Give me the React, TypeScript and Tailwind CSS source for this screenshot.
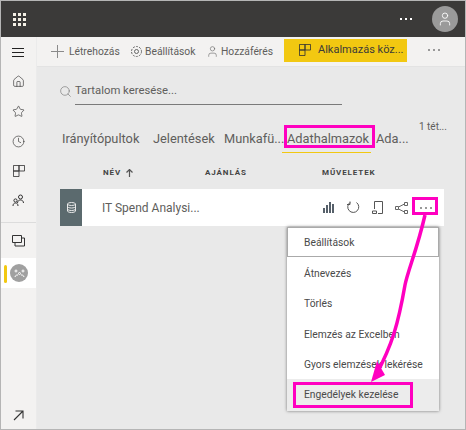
import { Clock, Home, Search, Star, User } from "lucide-react";

const font = { fontFamily: 'Roboto, "Open Sans", sans-serif' };

const AppsGrid = () => (
  <div className="grid grid-cols-3 gap-[2px] w-[13px]">
    {Array.from({ length: 9 }).map((_, i) => (
      <span key={i} className="w-[3px] h-[3px] bg-[#f4f0e6]" />
    ))}
  </div>
);

const Dots = ({ color = "bg-white" }: { color?: string }) => (
  <div className="flex gap-[3px]">
    <span className={`w-[2px] h-[2px] ${color}`} />
    <span className={`w-[2px] h-[2px] ${color}`} />
    <span className={`w-[2px] h-[2px] ${color}`} />
  </div>
);

const AppIcon = ({ stroke = "#444", size = 14 }: { stroke?: string; size?: number }) => (
  <svg width={size} height={size} viewBox="0 0 14 14" fill="none" stroke={stroke} strokeWidth="1">
    <path d="M.5.5h6.500v6.500H.5zM7 .5h6.500v6.500H7zM.5 7h6.500v6.500H.5z" />
  </svg>
);

const Rail = () => (
  <div className="w-[36px] shrink-0 bg-[#f3f2f1] border-r border-[#ebebeb] flex flex-col items-center">
    <div className="h-[30px] w-full flex flex-col items-center justify-center gap-[3px] pr-[1px]">
      <span className="w-[12px] h-[1px] bg-[#222]" />
      <span className="w-[12px] h-[1px] bg-[#222]" />
      <span className="w-[12px] h-[1px] bg-[#222]" />
    </div>
    <div className="h-[29px] flex items-center"><Home size={13} strokeWidth={1.2} color="#333" /></div>
    <div className="h-[30px] flex items-center"><Star size={13} strokeWidth={1.2} color="#333" /></div>
    <div className="h-[30px] flex items-center"><Clock size={13} strokeWidth={1.2} color="#333" /></div>
    <div className="h-[29px] flex items-center"><AppIcon stroke="#333" size={12} /></div>
    <div className="h-[30px] flex items-center">
      <svg width="13" height="13" viewBox="0 0 13 13" fill="none" stroke="#333" strokeWidth="1">
        <circle cx="8.500" cy="3" r="2" />
        <path d="M5.500 9c0-2 1.500-3 3-3s3 1 3 3" />
        <circle cx="3.500" cy="6.500" r="1.600" />
        <path d="M1 12c0-2 1-3 2.500-3s2.500 1 2.500 3" />
      </svg>
    </div>
    <div className="w-full h-[1px] bg-[#dcdcdc] mt-[7px]" />
    <div className="h-[35px] flex items-center">
      <svg width="13" height="12" viewBox="0 0 13 12" fill="none" stroke="#333" strokeWidth="1">
        <path d="M.5.500h9v7h-9zM10 3h2.500v8H3V8" />
      </svg>
    </div>
    <div className="relative h-[30px] w-full bg-white flex items-center justify-center">
      <span className="absolute left-[3px] top-[7px] w-[3px] h-[18px] rounded-sm bg-[#f2c811]" />
      <div className="w-[18px] h-[18px] rounded-full bg-[#a0a0a0] flex items-center justify-center ml-[1px]">
        <svg width="11" height="9" viewBox="0 0 11 9" fill="none" stroke="#fff" strokeWidth="1">
          <circle cx="2" cy="2" r="1" />
          <circle cx="9" cy="2" r="1" />
          <circle cx="5.500" cy="4.500" r="1" />
          <path d="M1 8c.5-2 1.500-2 3-2M10 8c-.5-2-1.500-2-3-2" />
        </svg>
      </div>
    </div>
    <div className="mt-auto mb-[8px]">
      <svg width="11" height="11" viewBox="0 0 11 11" fill="none" stroke="#333" strokeWidth="1.100">
        <path d="M1 10 10 1M2.500 1H10v7.500" />
      </svg>
    </div>
  </div>
);

const Toolbar = () => (
  <div className="h-[30px] bg-[#f3f2f1] border-b border-[#e3e3e3] flex items-center text-[10.3px] text-[#605e5c] shrink-0">
    <svg className="ml-[14px]" width="13" height="13" viewBox="0 0 13 13" stroke="#8a8a8a" strokeWidth="1">
      <path d="M6.500 0v13M0 6.500h13" />
    </svg>
    <span className="ml-[5px] w-[49px]">Létrehozás</span>
    <svg className="ml-[12px]" width="13" height="13" viewBox="0 0 13 13" fill="none" stroke="#666" strokeWidth="1">
      <circle cx="6.500" cy="6.500" r="2" />
      <circle cx="6.500" cy="6.500" r="5" strokeDasharray="2 1.200" />
    </svg>
    <span className="ml-[2px] w-[48px]">Beállítások</span>
    <User className="ml-[13px]" size={13} strokeWidth={1} color="#555" />
    <span className="ml-[2px] w-[50px]">Hozzáférés</span>
    <div className="ml-[13px] w-[123px] h-[23px] bg-[#f2c811] flex items-center text-[#3b3a39] mt-[-3px] shrink-0">
      <span className="ml-[15px] flex"><AppIcon stroke="#333" size={12} /></span>
      <span className="ml-[7px] text-[11px] whitespace-nowrap">Alkalmazás köz...</span>
    </div>
    <div className="ml-[21px] mt-[-3px]"><Dots color="bg-[#999]" /></div>
  </div>
);

const Tabs = () => (
  <div className="relative flex items-start h-[33px] mt-[20px] pl-[25px] text-[12.8px] text-[#605e5c] whitespace-nowrap">
    <span className="w-[78px]">Irányítópultok</span>
    <span className="ml-[13px] w-[57px]">Jelentések</span>
    <span className="ml-[14px] w-[57px]">Munkafü...</span>
    <span className="ml-[1px] pl-[5px] border-b border-[#f2c811] h-[24px] w-[89px]">Adathalmazok</span>
    <span className="ml-[5px]">Ada...</span>
    <span className="absolute left-[382px] top-[-10px] text-[10px]">1 tét...</span>
  </div>
);

const TableHeader = () => (
  <div className="flex items-center h-[27px] pb-[5px] text-[8px] font-bold tracking-[0.9px] text-[#444]">
    <span className="ml-[66px] w-[102px] flex items-center gap-[5px]">
      NÉV
      <svg width="7" height="8" viewBox="0 0 7 8" fill="none" stroke="#555" strokeWidth="1.200"><path d="M3.500 8V1M.5 3.500l3-3 3 3" /></svg>
    </span>
    <span className="w-[117px]">AJÁNLÁS</span>
    <span>MŰVELETEK</span>
  </div>
);

const Row = () => (
  <div className="flex h-[37px] ml-[23px] w-[384px] bg-white items-center">
    <div className="w-[22px] h-full bg-[#5b6a6e] flex items-center justify-center">
      <svg width="9" height="11" viewBox="0 0 9 11" fill="none" stroke="#e8e8e8" strokeWidth="1">
        <ellipse cx="4.500" cy="2" rx="4" ry="1.500" />
        <path d="M.5 2v7c0 .8 1.800 1.500 4 1.500s4-.7 4-1.500V2M.5 4.500c0 .8 1.800 1.500 4 1.500s4-.7 4-1.500M.5 7c0 .8 1.800 1.500 4 1.500s4-.7 4-1.500" />
      </svg>
    </div>
    <span className="ml-[20px] text-[12px] text-[#605e5c]">IT Spend Analysi...</span>
    <div className="ml-auto flex items-center text-[#555]">
      <svg width="13" height="13" viewBox="0 0 13 13" fill="#56606a"><path d="M0 7h2v5H0zM3 4h2v8H3zM6 1h2v11H6zM9 3h2v9H9z" /></svg>
      <svg className="ml-[11px]" width="13" height="13" viewBox="0 0 13 13" fill="none" stroke="#555" strokeWidth="1"><path d="M9.500 1.500A5.500 5.500 0 1 1 3 1.500M3 .5v3h-3" /></svg>
      <svg className="ml-[12px]" width="13" height="13" viewBox="0 0 13 13" fill="none" stroke="#555" strokeWidth="1"><path d="M2.500 8V.5h8v12H6M.5 10h4v2.500h-4z" /></svg>
      <svg className="ml-[10px]" width="13" height="12" viewBox="0 0 13 12" fill="none" stroke="#666" strokeWidth="1"><path d="M.5 4.500h3v3h-3zM9.500.5h3v3h-3zM9.500 8.500h3v3h-3zM3.500 5l6-3M3.500 7l6 3" /></svg>
      <div className="ml-[12px] mr-[12px]"><Dots color="bg-[#999]" /></div>
    </div>
  </div>
);

const items = ["Átnevezés", "Törlés", "Elemzés az Excelben", "Gyors elemzések lekérése"];

const Menu = () => (
  <div className="absolute left-[286px] top-[226px] w-[152px] h-[184px] bg-white shadow-[0_0_3px_rgba(0,0,0,0.5)] text-[10.3px] text-[#4a4a4a] flex flex-col">
    <div className="h-[30px] border border-[#aaa] flex items-center pl-[16px] pt-[1px]">Beállítások</div>
    {items.map(label => (
      <div key={label} className="h-[30.5px] flex items-center pl-[17px] pt-[2px] whitespace-nowrap">{label}</div>
    ))}
    <div className="flex-1 bg-[#ececec] flex items-center pl-[17px]">Engedélyek kezelése</div>
  </div>
);

const Highlight = ({ className }: { className: string }) => (
  <div className={`absolute border-[3px] border-[#ff00c0] ${className}`} />
);

export default function App() {
  return (
    <div style={font} className="relative w-[466px] h-[430px] overflow-hidden border border-[#b5b5b5] flex flex-col bg-[#e9e9e9]">
      <div className="h-[36px] shrink-0 bg-[#3b3a39] flex items-center pl-[12px]">
        <AppsGrid />
        <div className="ml-auto"><Dots /></div>
        <div className="ml-[20px] mr-[7px] w-[26px] h-[26px] rounded-full bg-[#9a9a9a] flex items-center justify-center">
          <User size={16} strokeWidth={1.3} color="#fff" />
        </div>
      </div>
      <div className="flex flex-1 min-h-0">
        <Rail />
        <div className="flex-1 min-w-0 flex flex-col">
          <Toolbar />
          <div className="flex items-center h-[36px] mt-[6px] pl-[22px] pr-[123px]">
            <Search size={13} strokeWidth={1.2} color="#777" />
            <div className="ml-[3px] flex-1 h-[25px] border-b border-[#7a7a7a] text-[11.3px] text-[#605e5c] flex items-center mt-[2px]">Tartalom keresése...</div>
          </div>
          <Tabs />
          <TableHeader />
          <Row />
        </div>
      </div>
      <Menu />
      <Highlight className="left-[283px] top-[124px] w-[91px] h-[23px]" />
      <Highlight className="left-[411px] top-[196px] w-[26px] h-[18px]" />
      <Highlight className="left-[292px] top-[381px] w-[120px] h-[26px]" />
      <svg className="absolute left-[-1px] top-[-1px]" width="466" height="430" fill="none">
        <path d="M425 215C417 250 408 270 405 285C398 325 392 345 376 375" stroke="#ff00c0" strokeWidth="3.500" />
        <path d="M371 382l14-7-8-14z" fill="#ff00c0" />
      </svg>
    </div>
  );
}
